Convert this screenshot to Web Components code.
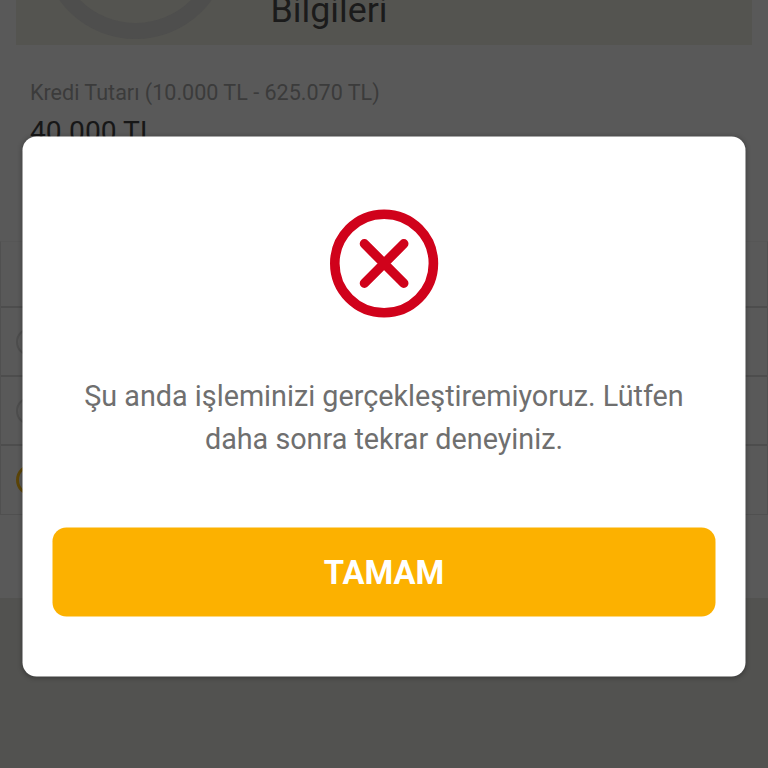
<!DOCTYPE html>
<html lang="tr">
<head>
<meta charset="utf-8">
<title>Kredi Bilgileri</title>
<style>
html,body{margin:0;padding:0;width:768px;height:768px;overflow:hidden;background:#525250}
body{font-family:Roboto,"Liberation Sans",sans-serif}
</style>
</head>
<body>
<loan-screen>
  <step-header slot="header">Bilgileri</step-header>
  <amount-field slot="amount" label="Kredi Tutarı (10.000 TL - 625.070 TL)">40.000 TL</amount-field>
  <option-row slot="options" style="height:66px"></option-row>
  <option-row slot="options" radio></option-row>
  <option-row slot="options" radio></option-row>
  <option-row slot="options" radio selected></option-row>
</loan-screen>
<alert-dialog>
  <error-icon slot="icon"></error-icon>
  <span>Şu anda işleminizi gerçekleştiremiyoruz. Lütfen<br>daha sonra tekrar deneyiniz.</span>
  <action-button slot="action">TAMAM</action-button>
</alert-dialog>
<script>
const define = (name, html, setup) => customElements.define(name, class extends HTMLElement {
  constructor() {
    super();
    this.attachShadow({ mode: 'open' }).innerHTML = html;
  }
  connectedCallback() { if (setup) setup(this); }
});

define('loan-screen', `<style>
:host{display:block;height:768px;background:#525250;overflow:hidden}
.sheet{box-sizing:border-box;height:598px;background:#595959;display:flex;flex-direction:column}
.list{margin-top:auto;margin-bottom:83px;border:1px solid #505050;border-top-color:#565656}
</style>
<div class="sheet"><slot name="header"></slot><slot name="amount"></slot><div class="list"><slot name="options"></slot></div></div>`);

define('step-header', `<style>
:host{display:flex;box-sizing:border-box;height:45px;margin:0 16px;background:#545450;overflow:hidden;flex:none;color:#1b1b1b;font-size:35.8px;line-height:42px}
svg{display:block;flex:none;width:254.5px;height:45px}
.t{margin-top:-11px}
</style>
<svg viewBox="16 0 254.5 45"><circle cx="135.5" cy="-55" r="86" fill="none" stroke="#4e4e4d" stroke-width="16"/></svg><span class="t"><slot></slot></span>`);

define('amount-field', `<style>
:host{display:block;padding:35px 30px 0}
.l{font-size:21.55px;line-height:26px;color:#3b3b3b;white-space:nowrap}
.v{font-size:28.2px;line-height:32px;margin-top:10px;color:#171717}
</style>
<div class="l"></div><div class="v"><slot></slot></div>`, el => {
  el.shadowRoot.querySelector('.l').textContent = el.getAttribute('label');
});

define('option-row', `<style>
:host{display:flex;box-sizing:border-box;align-items:center;height:69px;padding-left:15px;border-bottom:2px solid #4d4d4d}
:host([selected]){height:68px;border-bottom:0}
i{display:none;box-sizing:border-box;width:28px;height:28px;border:2px solid #4d4d4d;border-radius:50%}
:host([radio]) i{display:block}
:host([selected]) i{border:3px solid #5c4508;width:32px;height:32px}
</style><i></i>`);

define('alert-dialog', `<style>
:host{position:absolute;left:23px;top:137px;transform:translate(-.5px,-.5px);width:723px;height:540px;box-sizing:border-box;padding:72px 30px 60px;background:#fff;border-radius:14px;box-shadow:0 1px 5px rgba(0,0,0,.3);display:flex;flex-direction:column;align-items:center}
.m{margin:56px -10px 0;text-align:center;white-space:nowrap;font-size:28.75px;line-height:43px;color:#6f6f6f}
slot[name=action]{display:block;margin-top:auto;align-self:stretch}
</style>
<slot name="icon"></slot><div class="m"><slot></slot></div><slot name="action"></slot>`);

define('error-icon', `<style>:host{display:block;width:110px;height:110px}svg{display:block}</style>
<svg width="110" height="110" viewBox="0 0 110 110" fill="none" stroke="#d0021b"><circle cx="54.6" cy="55" r="49.3" stroke-width="9.6"/><path d="M34.9 35.3 74.3 74.7M74.3 35.3 34.9 74.7" stroke-width="9.4" stroke-linecap="round"/></svg>`);

define('action-button', `<style>
:host{display:block}
button{display:block;width:100%;height:89px;border:0;padding:0;border-radius:14px;background:#fcb100;color:#fff;font:700 32.8px/88px Roboto,"Liberation Sans",sans-serif}
</style><button type="button"><slot></slot></button>`);
</script>
</body>
</html>
